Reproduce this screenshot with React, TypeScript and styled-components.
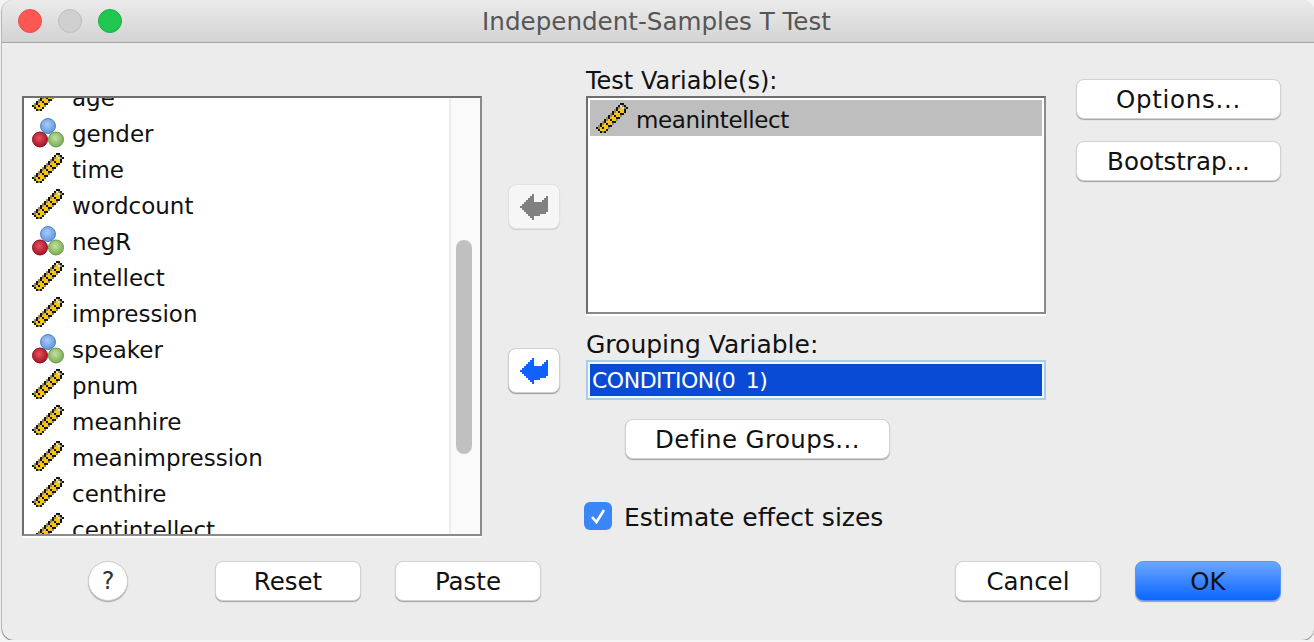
import React from 'react'
import styled, { createGlobalStyle } from 'styled-components'

const GlobalStyle = createGlobalStyle`
  html, body {
    margin: 0;
    padding: 0;
    background: #f4f4f4;
    overflow: hidden;
  }
  body {
    font-family: "DejaVu Sans", "Liberation Sans", sans-serif;
    color: #111;
  }
`

const Window = styled.div`
  margin-left: 2px;
  height: 640px;
  background: #ececec;
  border-radius: 12px;
  box-shadow: 0 1px 1px #777, -1px 0 1px #bbb;
  overflow: hidden;
`

const TitleBar = styled.header`
  height: 43px;
  box-sizing: border-box;
  display: flex;
  align-items: center;
  gap: 16px;
  padding-left: 16px;
  position: relative;
  background: linear-gradient(#ebebeb, #d3d3d3);
  border-bottom: 1px solid #a6a6a6;
`

const Light = styled.span<{ $color: string; $edge: string }>`
  width: 24px;
  height: 24px;
  box-sizing: border-box;
  border-radius: 50%;
  background: ${p => p.$color};
  border: 1px solid ${p => p.$edge};
`

const Title = styled.h1`
  position: absolute;
  left: 0;
  right: 3px;
  top: 0;
  margin: 0;
  line-height: 44px;
  text-align: center;
  font-size: 24.6px;
  font-weight: 400;
  color: #565656;
`

const Main = styled.div`
  display: flex;
  align-items: flex-start;
  padding: 25px 0 0 20px;
  height: 468px;
  box-sizing: border-box;
`

const ListBox = styled.div`
  width: 460px;
  height: 440px;
  margin-top: 28px;
  box-sizing: border-box;
  display: flex;
  background: #fff;
  border: 2px solid #8a8a8a;
  border-top-color: #6e6e6e;
  border-left-color: #6e6e6e;
  box-shadow: 0 2px 0 #fff;
  overflow: hidden;
`

const Rows = styled.div`
  flex: 1;
  overflow: hidden;
  padding-top: 1px;
`

const RowStack = styled.div`
  margin-top: -19px;
`

const Row = styled.div`
  height: 36px;
  box-sizing: border-box;
  display: flex;
  align-items: center;
  gap: 8px;
  padding-left: 8px;
  font-size: 23px;
  line-height: 36px;
`

const IconBox = styled.span`
  flex: none;
  width: 32px;
  height: 32px;
`

const ScrollTrack = styled.div`
  flex: none;
  width: 31px;
  box-sizing: border-box;
  padding: 142px 6px 0 5px;
  background: #fafafa;
  border-left: 2px solid #ececec;
`

const ScrollThumb = styled.div`
  width: 16px;
  height: 214px;
  border-radius: 8px;
  background: #c0c0c0;
`

const ArrowColumn = styled.div`
  flex: none;
  width: 104px;
  box-sizing: border-box;
  padding: 116px 0 0 26px;
  display: flex;
  flex-direction: column;
  gap: 119px;
`

const ArrowButton = styled.button<{ $disabled?: boolean }>`
  width: 52px;
  height: 45px;
  padding: 0;
  display: flex;
  align-items: center;
  justify-content: center;
  border-radius: 8px;
  border: 1px solid ${p => (p.$disabled ? '#e2e2e2' : '#d0d0d0')};
  background: ${p => (p.$disabled ? '#f6f6f6' : '#fff')};
  box-shadow: 0 1px 1px ${p => (p.$disabled ? 'rgba(0,0,0,.12)' : 'rgba(0,0,0,.35)')};
`

const CenterColumn = styled.div`
  flex: none;
  width: 460px;
  display: flex;
  flex-direction: column;
  align-items: flex-start;
`

const FieldLabel = styled.div<{ $size: number }>`
  height: 28px;
  font-size: ${p => p.$size}px;
  line-height: 26px;
  white-space: nowrap;
`

const VariableBox = styled.div`
  width: 460px;
  height: 218px;
  box-sizing: border-box;
  padding: 2px;
  margin-bottom: 18px;
  background: #fff;
  border: 2px solid #8a8a8a;
  border-top-color: #6e6e6e;
  border-left-color: #6e6e6e;
  box-shadow: 0 2px 0 #fff;
`

const SelectedRow = styled(Row)`
  background: #bebebe;
  padding: 3px 0 0 6px;
  letter-spacing: -0.4px;
`

const GroupField = styled.div`
  width: 460px;
  height: 40px;
  box-sizing: border-box;
  border: 2px solid #a3d0e6;
  padding: 2px;
  background: #f4f8fa;
`

const GroupValue = styled.div`
  height: 32px;
  padding-left: 2px;
  background: #0a4bd6;
  color: #fff;
  font-size: 22px;
  letter-spacing: -0.5px;
  word-spacing: 4px;
  line-height: 33px;
  white-space: nowrap;
`

const PushButton = styled.button<{ $width: number; $primary?: boolean; $track?: number }>`
  width: ${p => p.$width}px;
  height: 40px;
  flex: none;
  box-sizing: border-box;
  padding: 0;
  border-radius: 8px;
  font-family: inherit;
  font-size: 24.5px;
  letter-spacing: ${p => p.$track ?? 0}px;
  color: #111;
  border: 1px solid ${p => (p.$primary ? '#5c96f2' : '#d2d2d2')};
  background: ${p => (p.$primary ? 'linear-gradient(#6ba6ff, #0a66ff)' : '#fff')};
  box-shadow: 0 1px 1px rgba(0, 0, 0, 0.32);
`

const DefineButton = styled(PushButton)`
  margin: 19px 0 0 39px;
`

const CheckRow = styled.label`
  display: flex;
  align-items: center;
  gap: 12px;
  margin: 43px 0 0 -2px;
  font-size: 25px;
  height: 28px;
  white-space: nowrap;
`

const CheckText = styled.span`
  padding-top: 3px;
`

const CheckBox = styled.span`
  width: 28px;
  height: 28px;
  border-radius: 6px;
  background: #3b86f7;
  display: flex;
  align-items: center;
  justify-content: center;
`

const SideColumn = styled.div`
  margin: 11px 0 0 30px;
  display: flex;
  flex-direction: column;
  gap: 22px;
`

const Footer = styled.footer`
  display: flex;
  align-items: center;
  padding: 50px 33px 0 86px;
`

const HelpButton = styled.button`
  width: 40px;
  height: 40px;
  flex: none;
  padding: 0;
  border-radius: 50%;
  background: #fff;
  border: 1px solid #cfcfcf;
  box-shadow: 0 1px 1px rgba(0, 0, 0, 0.3);
  font-family: inherit;
  font-size: 24px;
  color: #333;
  margin-right: 87px;
`

const ButtonGroup = styled.div`
  display: flex;
  gap: 34px;
`

const Spacer = styled.div`
  flex: 1;
`

// 16x16 SPSS scale icon, doubled on screen
const rulerPixels = [
  '............KK..',
  '...........KWGK.',
  '..........KGYWGK',
  '.........GKYYYK.',
  '........KGYKYYK.',
  '.......GKYYYKK..',
  '......KGYKYYG...',
  '.....GKYYYKK....',
  '....KGYKYYG.....',
  '...GKYYYKK......',
  '..KGYKYYG.......',
  '.GKYYYKK........',
  'KGYKYYG.........',
  '.KYYYK..........',
  '..KGK...........',
  '................',
]

const pixelColors: Record<string, string> = {
  K: '#141414',
  G: '#8f8a5c',
  Y: '#f7c411',
  W: '#e8e4c0',
}

function RulerIcon() {
  return (
    <IconBox>
      <svg width="32" height="32" viewBox="0 0.5 16 16" overflow="visible" shapeRendering="crispEdges">
        {rulerPixels.flatMap((line, y) =>
          line.split('').map((c, x) =>
            c === '.' ? null : <rect key={`${x}-${y}`} x={x} y={y} width="1" height="1" fill={pixelColors[c]} />
          )
        )}
      </svg>
    </IconBox>
  )
}

function NominalIcon() {
  return (
    <IconBox>
      <svg width="32" height="32" viewBox="0 0 32 32">
        <defs>
          <radialGradient id="ballBlue" cx="45%" cy="40%" r="60%">
            <stop offset="0%" stopColor="#a8ccf6" />
            <stop offset="100%" stopColor="#5f96e0" />
          </radialGradient>
          <radialGradient id="ballRed" cx="45%" cy="40%" r="60%">
            <stop offset="0%" stopColor="#e4525e" />
            <stop offset="100%" stopColor="#a81025" />
          </radialGradient>
          <radialGradient id="ballGreen" cx="45%" cy="40%" r="60%">
            <stop offset="0%" stopColor="#c4e0a4" />
            <stop offset="100%" stopColor="#78ac52" />
          </radialGradient>
        </defs>
        <circle cx="16" cy="8" r="7.5" fill="url(#ballBlue)" stroke="#4f82c8" strokeWidth="1" />
        <circle cx="8" cy="21.5" r="7.5" fill="url(#ballRed)" stroke="#8e1020" strokeWidth="1" />
        <circle cx="24" cy="21.5" r="7.5" fill="url(#ballGreen)" stroke="#6a9c48" strokeWidth="1" />
      </svg>
    </IconBox>
  )
}

function ArrowIcon({ color }: { color: string }) {
  return (
    <svg width="28" height="26" viewBox="0 0 14 13" shapeRendering="crispEdges">
      <path
        fill={color}
        d="M7 0v13h-1v-1h-1v-1h-1v-1h-1v-1h-1v-1h-1v-1h-1v-1h1v-1h1v-1h1v-1h1v-1h1v-1h1v-1zM7 4h4v-1h1v-1h1v-1h1v8h-1v1h-3v1h-3z"
      />
    </svg>
  )
}

const variables: { name: string; kind: 'scale' | 'nominal' }[] = [
  { name: 'age', kind: 'scale' },
  { name: 'gender', kind: 'nominal' },
  { name: 'time', kind: 'scale' },
  { name: 'wordcount', kind: 'scale' },
  { name: 'negR', kind: 'nominal' },
  { name: 'intellect', kind: 'scale' },
  { name: 'impression', kind: 'scale' },
  { name: 'speaker', kind: 'nominal' },
  { name: 'pnum', kind: 'scale' },
  { name: 'meanhire', kind: 'scale' },
  { name: 'meanimpression', kind: 'scale' },
  { name: 'centhire', kind: 'scale' },
  { name: 'centintellect', kind: 'scale' },
]

export default function App() {
  return (
    <>
      <GlobalStyle />
      <Window>
        <TitleBar>
          <Light $color="#fc5753" $edge="#e8504c" />
          <Light $color="#d0d0d0" $edge="#bcbcbc" />
          <Light $color="#1fc74f" $edge="#1aae44" />
          <Title>Independent-Samples T Test</Title>
        </TitleBar>
        <Main>
          <ListBox>
            <Rows>
              <RowStack>
                {variables.map(v => (
                  <Row key={v.name}>
                    {v.kind === 'scale' ? <RulerIcon /> : <NominalIcon />}
                    {v.name}
                  </Row>
                ))}
              </RowStack>
            </Rows>
            <ScrollTrack>
              <ScrollThumb />
            </ScrollTrack>
          </ListBox>
          <ArrowColumn>
            <ArrowButton $disabled>
              <ArrowIcon color="#808080" />
            </ArrowButton>
            <ArrowButton>
              <ArrowIcon color="#0f62fe" />
            </ArrowButton>
          </ArrowColumn>
          <CenterColumn>
            <FieldLabel $size={24}>Test Variable(s):</FieldLabel>
            <VariableBox>
              <SelectedRow>
                <RulerIcon />
                meanintellect
              </SelectedRow>
            </VariableBox>
            <FieldLabel $size={25}>Grouping Variable:</FieldLabel>
            <GroupField>
              <GroupValue>CONDITION(0 1)</GroupValue>
            </GroupField>
            <DefineButton $width={265} $track={0.4}>Define Groups...</DefineButton>
            <CheckRow>
              <CheckBox>
                <svg width="20" height="20" viewBox="0 0 20 20">
                  <path d="M4 11l4.5 5L16 4" fill="none" stroke="#fff" strokeWidth="2.6" />
                </svg>
              </CheckBox>
              <CheckText>Estimate effect sizes</CheckText>
            </CheckRow>
          </CenterColumn>
          <SideColumn>
            <PushButton $width={205} $track={0.7}>Options...</PushButton>
            <PushButton $width={205}>Bootstrap...</PushButton>
          </SideColumn>
        </Main>
        <Footer>
          <HelpButton>?</HelpButton>
          <ButtonGroup>
            <PushButton $width={146}>Reset</PushButton>
            <PushButton $width={146}>Paste</PushButton>
          </ButtonGroup>
          <Spacer />
          <ButtonGroup>
            <PushButton $width={146}>Cancel</PushButton>
            <PushButton $width={146} $primary>OK</PushButton>
          </ButtonGroup>
        </Footer>
      </Window>
    </>
  )
}
